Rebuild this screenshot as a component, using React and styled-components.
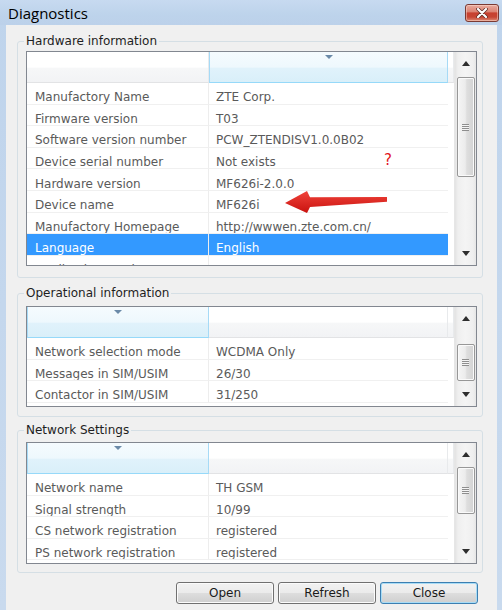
import React from "react";
import styled, { createGlobalStyle } from "styled-components";

const GlobalStyle = createGlobalStyle`
  html, body { margin: 0; padding: 0; width: 502px; height: 610px; overflow: hidden; background: #c4d7ed; }
  body { font-family: "DejaVu Sans", "Liberation Sans", sans-serif; font-size: 12px; }
  * { box-sizing: border-box; }
`;

const Window = styled.div`
  position: relative;
  width: 502px;
  height: 610px;
  display: flex;
  flex-direction: column;
  background: linear-gradient(to bottom, #bfd4ec 0%, #c9daee 100%);
`;

const TitleBar = styled.div`
  height: 25px;
  flex: none;
  display: flex;
  align-items: center;
  justify-content: space-between;
  padding: 0 3px 0 8px;
  background: linear-gradient(to bottom, #c7daf0 0%, #bdd3eb 60%, #bcd1ea 100%);
`;

const Title = styled.span`
  font-family: "Open Sans", "DejaVu Sans", sans-serif;
  font-size: 15px;
  color: #000;
`;

const CloseX = styled.div`
  width: 34px;
  height: 18px;
  margin-top: 1px;
  border: 1px solid #7a3a33;
  border-radius: 3px;
  display: flex;
  align-items: center;
  justify-content: center;
  background: linear-gradient(to bottom, #e9ab9f 0%, #db8474 42%, #c7402f 50%, #c64533 75%, #de8a74 100%);
  box-shadow: inset 0 0 0 1px rgba(255, 230, 220, 0.45);
`;

const Client = styled.div`
  flex: 1;
  margin: 0 5px 0 6px;
  background: #f0f0f0;
  padding: 9px 14px 0 11px;
  display: flex;
  flex-direction: column;
`;

const Group = styled.fieldset`
  margin: ${(p) => p.$mt}px 0 0 0;
  padding: ${(p) => p.$pt}px 5px ${(p) => p.$pb}px 8px;
  border: 1px solid #d5dfe5;
  border-radius: 3px;
  min-width: 0;
`;

const Legend = styled.legend`
  padding: 0 2px;
  margin-left: -2px;
  line-height: 14px;
  font-size: 12px;
  color: #1e1e1e;
`;

const ListView = styled.div`
  height: ${(p) => p.$h}px;
  border: 1px solid #828790;
  background: #fff;
  display: flex;
  overflow: hidden;
`;

const ListBody = styled.div`
  flex: 1;
  min-width: 0;
  display: flex;
  flex-direction: column;
  overflow: hidden;
`;

const HeaderRow = styled.div`
  display: flex;
  height: 31px;
  flex: none;
`;

const HeaderCell = styled.div`
  position: relative;
  width: ${(p) => (p.$w ? `${p.$w}px` : "auto")};
  flex: ${(p) => (p.$w ? "none" : "1")};
  height: 31px;
  border-bottom: 1px solid ${(p) => (p.$sorted ? "#96d9f9" : "#e2e3e5")};
  border-left: ${(p) => (p.$sorted ? "1px solid #a6daf6" : "none")};
  border-right: 1px solid ${(p) => (p.$sorted ? "#a6daf6" : "#e8eaec")};
  background: ${(p) =>
    p.$sorted
      ? "linear-gradient(to bottom, #f5fbfe 0%, #eef8fd 50%, #e0f2fb 55%, #d9eff9 100%)"
      : "linear-gradient(to bottom, #ffffff 0%, #ffffff 50%, #f6f7f8 55%, #f2f3f5 100%)"};
`;

const SortArrow = styled.svg`
  position: absolute;
  top: 3px;
  left: 50%;
  margin-left: -4px;
`;

const Row = styled.div`
  display: flex;
  height: 21.6px;
  flex: none;
`;

const Cell = styled.div`
  width: ${(p) => p.$w}px;
  flex: none;
  display: flex;
  align-items: center;
  padding: 8px 0 0 ${(p) => p.$pl}px;
  border-bottom: 1px solid #f0f0f0;
  border-right: ${(p) => (p.$divider ? "1px solid #ededed" : "none")};
  background: ${(p) => (p.$selected ? "#3399ff" : "transparent")};
  color: ${(p) => (p.$selected ? "#ffffff" : "#5a5a5a")};
  white-space: nowrap;
  overflow: hidden;
`;

const ScrollBar = styled.div`
  width: 22px;
  flex: none;
  display: flex;
  flex-direction: column;
  background: linear-gradient(to right, #e3e3e3 0px, #efefef 3px, #f4f4f4 50%, #efefef calc(100% - 3px), #e6e6e6 100%);
  border-left: 1px solid #e6e6e6;
`;

const ArrowBtn = styled.div`
  height: 23px;
  flex: none;
  display: flex;
  align-items: center;
  justify-content: center;
`;

const Track = styled.div`
  flex: 1;
  display: flex;
  flex-direction: column;
  align-items: center;
`;

const Thumb = styled.div`
  margin-top: ${(p) => p.$top}px;
  height: ${(p) => p.$h}px;
  width: 18px;
  border: 1px solid #979797;
  border-radius: 2px;
  display: flex;
  align-items: center;
  justify-content: center;
  background: linear-gradient(to right, #f5f5f5 0%, #ececec 45%, #dedede 55%, #d3d3d3 100%);
  box-shadow: inset 0 0 0 1px #fafafa;
`;

const Grip = styled.div`
  width: 7px;
  height: 7px;
  background: repeating-linear-gradient(to bottom, #8e8e8e 0px, #8e8e8e 1px, #f4f4f4 1px, #f4f4f4 2px);
`;

const ButtonRow = styled.div`
  display: flex;
  justify-content: flex-end;
  gap: 4px;
  margin-top: 9px;
  padding-right: 5px;
`;

const Button = styled.button`
  width: 98px;
  height: 22px;
  padding: 0;
  font-family: "DejaVu Sans", sans-serif;
  font-size: 12px;
  color: #1a1a1a;
  border: 1px solid ${(p) => (p.$default ? "#3c7fb1" : "#707070")};
  border-radius: 3px;
  background: linear-gradient(to bottom, #f2f2f2 0%, #ebebeb 48%, #dddddd 52%, #cfcfcf 100%);
  box-shadow: inset 0 0 0 1px ${(p) => (p.$default ? "#a8dcf6" : "#fbfbfb")};
`;

const Annotations = styled.svg`
  position: absolute;
  left: 280px;
  top: 186px;
  pointer-events: none;
`;

const Question = styled.span`
  position: absolute;
  left: 384px;
  top: 151px;
  font-family: "DejaVu Sans", sans-serif;
  font-size: 15px;
  color: #e2141c;
`;

const COL1 = 182;
const COL2 = 239;

function ArrowGlyph({ up }) {
  return (
    <svg width="8" height="5" viewBox="0 0 8 5">
      <polygon points={up ? "4,0 8,5 0,5" : "0,0 8,0 4,5"} fill="#2e2e2e" />
    </svg>
  );
}

function List({ height, sortedCol, rows, selected, thumbTop, thumbH }) {
  return (
    <ListView $h={height}>
      <ListBody>
        <HeaderRow>
          <HeaderCell $w={COL1} $sorted={sortedCol === 0}>
            {sortedCol === 0 && (
              <SortArrow width="8" height="4" viewBox="0 0 8 4">
                <polygon points="0,0 8,0 4,4" fill="#6b8aa8" />
              </SortArrow>
            )}
          </HeaderCell>
          <HeaderCell $w={COL2} $sorted={sortedCol === 1}>
            {sortedCol === 1 && (
              <SortArrow width="8" height="4" viewBox="0 0 8 4">
                <polygon points="0,0 8,0 4,4" fill="#6b8aa8" />
              </SortArrow>
            )}
          </HeaderCell>
          <HeaderCell />
        </HeaderRow>
        {rows.map(([k, v], i) => (
          <Row key={i}>
            <Cell $w={COL1} $pl={8} $divider $selected={i === selected}>
              {k}
            </Cell>
            <Cell $w={COL2} $pl={7} $selected={i === selected}>
              {v}
            </Cell>
          </Row>
        ))}
      </ListBody>
      <ScrollBar>
        <ArrowBtn>
          <ArrowGlyph up />
        </ArrowBtn>
        <Track>
          <Thumb $top={thumbTop} $h={thumbH}>
            <Grip />
          </Thumb>
        </Track>
        <ArrowBtn>
          <ArrowGlyph />
        </ArrowBtn>
      </ScrollBar>
    </ListView>
  );
}

const hardware = [
  ["Manufactory Name", "ZTE Corp."],
  ["Firmware version", "T03"],
  ["Software version number", "PCW_ZTENDISV1.0.0B02"],
  ["Device serial number", "Not exists"],
  ["Hardware version", "MF626i-2.0.0"],
  ["Device name", "MF626i"],
  ["Manufactory Homepage", "http://wwwen.zte.com.cn/"],
  ["Language", "English"],
  ["Application version", "WCDMA"],
];

const operational = [
  ["Network selection mode", "WCDMA Only"],
  ["Messages in SIM/USIM", "26/30"],
  ["Contactor in SIM/USIM", "31/250"],
];

const network = [
  ["Network name", "TH GSM"],
  ["Signal strength", "10/99"],
  ["CS network registration", "registered"],
  ["PS network registration", "registered"],
];

export default function App() {
  return (
    <>
      <GlobalStyle />
      <Window>
        <TitleBar>
          <Title>Diagnostics</Title>
          <CloseX>
            <svg width="12" height="10" viewBox="0 0 12 10">
              <path d="M2 1 L10 9 M10 1 L2 9" stroke="#5a2a24" strokeWidth="3.6" strokeLinecap="round" />
              <path d="M2 1 L10 9 M10 1 L2 9" stroke="#ffffff" strokeWidth="2.2" strokeLinecap="round" />
            </svg>
          </CloseX>
        </TitleBar>
        <Client>
          <Group $mt={0} $pt={3} $pb={11}>
            <Legend>Hardware information</Legend>
            <List height={215} sortedCol={1} rows={hardware} selected={7} thumbTop={2} thumbH={100} />
          </Group>
          <Group $mt={8} $pt={6} $pb={9}>
            <Legend>Operational information</Legend>
            <List height={101} sortedCol={0} rows={operational} selected={-1} thumbTop={14} thumbH={37} />
          </Group>
          <Group $mt={6} $pt={5} $pb={8}>
            <Legend>Network Settings</Legend>
            <List height={122} sortedCol={0} rows={network} selected={-1} thumbTop={1} thumbH={47} />
          </Group>
          <ButtonRow>
            <Button>Open</Button>
            <Button>Refresh</Button>
            <Button $default>Close</Button>
          </ButtonRow>
        </Client>
        <Question>?</Question>
        <Annotations width="112" height="30" viewBox="0 0 112 30">
          <defs>
            <linearGradient id="arrowFill" x1="0" y1="0" x2="0" y2="1">
              <stop offset="0" stopColor="#f0433a" />
              <stop offset="1" stopColor="#c9120f" />
            </linearGradient>
          </defs>
          <polygon
            points="5,17 27,5 30,11.3 107,11 107,15.7 30,21 27,27"
            fill="url(#arrowFill)"
          />
        </Annotations>
      </Window>
    </>
  );
}
